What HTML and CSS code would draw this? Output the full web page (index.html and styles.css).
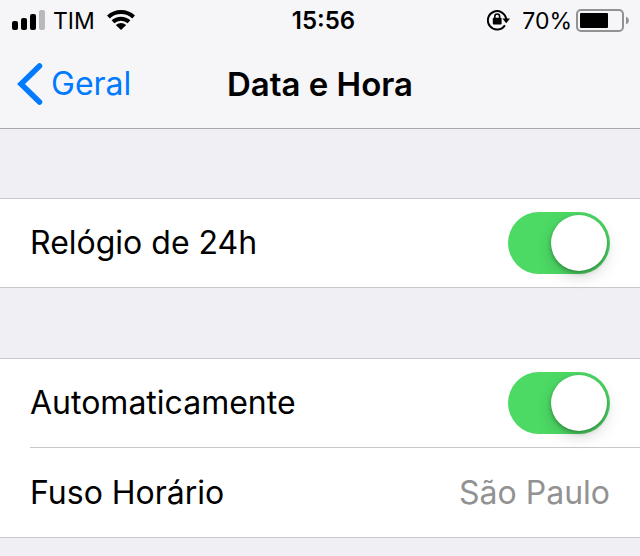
FILE: index.html
```html
<!DOCTYPE html>
<html lang="pt-BR">
<head>
<meta charset="utf-8">
<meta name="viewport" content="width=device-width, initial-scale=1">
<title>Data e Hora</title>
<link rel="stylesheet" href="styles.css">
</head>
<body>
<header class="header">
  <div class="status">
    <div class="status-left">
      <svg class="icon" width="33" height="20" viewBox="0 0 33 20" aria-hidden="true">
        <rect x="0" y="11" width="6" height="9" rx="2"/>
        <rect x="9" y="8" width="6" height="12" rx="2"/>
        <rect x="18" y="4" width="6" height="16" rx="2"/>
        <rect x="27" y="0" width="6" height="20" rx="2" fill="#b9b9bb"/>
      </svg>
      <span class="carrier">TIM</span>
      <svg class="icon" width="28" height="20" viewBox="0 0 28 20" aria-hidden="true">
        <g fill="none" stroke="#000" stroke-width="4">
          <path d="M1.4 7A18.4 18.4 0 0 1 26.6 7"/>
          <path d="M6 11.8A11.8 11.8 0 0 1 22 11.8"/>
        </g>
        <path d="M8.8 15Q14 11.2 19.2 15L14 20Z"/>
      </svg>
    </div>
    <time class="clock">15:56</time>
    <div class="status-right">
      <svg class="icon" width="23" height="22" viewBox="0 0 23 22" aria-hidden="true">
        <path d="M17.9 16.2A9.2 9.2 0 1 1 19.2 10.2" fill="none" stroke="#000" stroke-width="2"/>
        <path d="M15.4 9.6H23L19.2 14.2Z"/>
        <rect x="5.8" y="8.8" width="8.8" height="6.8" rx="1"/>
        <path d="M7.8 9.4V7.4a2.4 2.4 0 0 1 4.8 0V9.4" fill="none" stroke="#000" stroke-width="1.6"/>
      </svg>
      <span class="percent">70%</span>
      <svg class="icon" width="53" height="23" viewBox="0 0 53 23" aria-hidden="true">
        <rect x="1" y="1" width="46" height="21" rx="4" fill="none" stroke="#929294" stroke-width="2"/>
        <rect x="4" y="4" width="28" height="15" rx="1"/>
        <path d="M50 7.5Q53 9 53 11.5T50 15.5Z" fill="#929294"/>
      </svg>
    </div>
  </div>
  <nav class="nav">
    <a class="back" href="#">
      <svg class="icon" width="26" height="42" viewBox="0 0 26 42" aria-hidden="true">
        <path d="M22.5 3L4 21L22.5 39" fill="none" stroke="#007aff" stroke-width="5.5" stroke-linecap="round"/>
      </svg>
      Geral
    </a>
    <h1 class="title">Data e Hora</h1>
  </nav>
</header>
<main class="settings">
  <section class="group">
    <div class="row">
      <label class="label" for="clock24">Relógio de 24h</label>
      <input class="switch" type="checkbox" role="switch" id="clock24" checked>
    </div>
  </section>
  <section class="group">
    <div class="row">
      <label class="label" for="auto">Automaticamente</label>
      <input class="switch" type="checkbox" role="switch" id="auto" checked>
    </div>
    <div class="row">
      <span class="label">Fuso Horário</span>
      <span class="value">São Paulo</span>
    </div>
  </section>
</main>
</body>
</html>
```
FILE: styles.css
```css
* {
  box-sizing: border-box;
}

body {
  margin: 0;
  background: #efeff4;
  color: #000;
  font-family: Inter, "Liberation Sans", sans-serif;
  font-size: 32px;
  line-height: 40px;
}

.header {
  background: #f6f6f8;
  border-bottom: 1px solid #a7a7ac;
}

.status {
  display: grid;
  grid-template-columns: 1fr auto 1fr;
  align-items: center;
  height: 40px;
  padding: 0 11px 0 12px;
  font-size: 23px;
  line-height: 38px;
}

.status-left,
.status-right {
  display: flex;
  align-items: center;
}

.status-left {
  gap: 8px;
}

.status-right {
  justify-content: flex-end;
  gap: 4px;
}

.carrier {
  margin-right: 4px;
}

.carrier,
.clock,
.percent {
  padding-top: 2px;
}

.percent {
  margin-left: 8px;
}

.clock {
  padding-left: 6px;
  font-size: 24px;
  font-weight: 600;
}

.icon {
  display: block;
  flex: none;
}

.nav {
  display: grid;
  grid-template-columns: 1fr auto 1fr;
  align-items: center;
  height: 88px;
  padding: 0 17px;
}

.back {
  display: flex;
  align-items: center;
  gap: 8px;
  color: #007aff;
  text-decoration: none;
}

.title {
  margin: 0;
  font-size: 33px;
  font-weight: 600;
}

.settings {
  display: grid;
  gap: 70px;
  padding: 69px 0 16px;
}

.group {
  background: #fff;
  border-top: 1px solid #c8c7cc;
  border-bottom: 1px solid #c8c7cc;
}

.row {
  display: flex;
  align-items: center;
  justify-content: space-between;
  height: 88px;
  margin-left: 30px;
  padding-right: 30px;
}

.row + .row {
  height: 90px;
  border-top: 1px solid #c8c7cc;
}

.value {
  color: #929292;
}

.switch {
  appearance: none;
  display: flex;
  align-items: center;
  justify-content: flex-end;
  width: 102px;
  height: 62px;
  margin: 0;
  padding: 3px;
  border-radius: 31px;
  background: #e5e5ea;
}

.switch::before {
  content: "";
  width: 56px;
  height: 56px;
  border-radius: 50%;
  background: #fff;
  box-shadow: 0 6px 16px rgba(0, 0, 0, 0.15), 0 2px 4px rgba(0, 0, 0, 0.3);
}

.switch:not(:checked) {
  justify-content: flex-start;
}

.switch:checked {
  background: #4cd964;
}
```
